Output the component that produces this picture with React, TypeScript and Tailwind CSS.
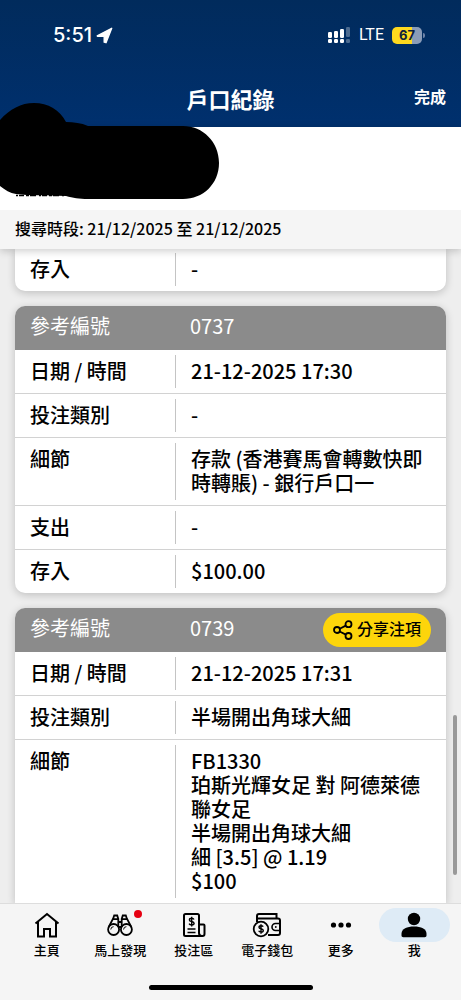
import type { ReactNode } from 'react'

type Row = { label: string; lines: string[] }

type BetRecord = {
  id: string
  reference?: string
  shareable?: boolean
  continues?: boolean
  rows: Row[]
}

const records: BetRecord[] = [
  {
    id: 'previous',
    rows: [{ label: '存入', lines: ['-'] }],
  },
  {
    id: '0737',
    reference: '0737',
    rows: [
      { label: '日期 / 時間', lines: ['21-12-2025 17:30'] },
      { label: '投注類別', lines: ['-'] },
      { label: '細節', lines: ['存款 (香港賽馬會轉數快即時轉賬) - 銀行戶口一'] },
      { label: '支出', lines: ['-'] },
      { label: '存入', lines: ['$100.00'] },
    ],
  },
  {
    id: '0739',
    reference: '0739',
    shareable: true,
    continues: true,
    rows: [
      { label: '日期 / 時間', lines: ['21-12-2025 17:31'] },
      { label: '投注類別', lines: ['半場開出角球大細'] },
      {
        label: '細節',
        lines: [
          'FB1330',
          '珀斯光輝女足 對 阿德萊德聯女足',
          '半場開出角球大細',
          '細 [3.5] @ 1.19',
          '$100',
        ],
      },
    ],
  },
]

function StatusBar() {
  return (
    <div className="flex h-[70px] items-center justify-between pl-[53px] pr-9 font-['Inter','Liberation_Sans',sans-serif]">
      <div className="flex items-center gap-1">
        <span className="text-[20px] font-medium leading-6">5:51</span>
        <svg
          width="17"
          height="17"
          viewBox="0 0 17 17"
          fill="currentColor"
          stroke="currentColor"
          strokeWidth="1.4"
          strokeLinejoin="round"
          aria-hidden="true">
          <path d="M1.2 8.8L15.7 1.3L10 15.7L8.2 15.2V9.2L1.4 9.2z" />
        </svg>
      </div>
      <div className="flex items-center gap-2">
        <svg width="24" height="17" viewBox="0 0 24 17" fill="currentColor" aria-hidden="true">
          <rect x="1" y="5" width="4" height="6" rx="1.2" />
          <rect x="7" y="4" width="4" height="7" rx="1.2" />
          <rect x="13" y="2" width="4" height="9" rx="1.2" />
          <rect x="19" y="0" width="4" height="10" rx="1.2" opacity=".3" />
          <rect x="1" y="12" width="4" height="4" rx="1.2" />
          <rect x="7" y="12" width="4" height="4" rx="1.2" />
          <rect x="13" y="12" width="4" height="4" rx="1.2" />
          <rect x="19" y="12" width="4" height="4" rx="1.2" opacity=".3" />
        </svg>
        <span className="font-['Roboto',sans-serif] text-[16px] leading-5">LTE</span>
        <span className="flex items-center gap-px">
          <span className="flex h-[17px] w-[30px] items-center justify-center rounded-[5px] bg-linear-to-r from-[#ffd91e] from-67% to-[#8a9cb8] to-67% text-[13px] font-bold leading-4 text-[#10213c]">
            67
          </span>
          <span className="h-[5px] w-[2px] rounded-r-full bg-[#6e84a8]" />
        </span>
      </div>
    </div>
  )
}

function ShareIcon() {
  return (
    <svg width="20" height="20" viewBox="0 0 20 20" fill="none" stroke="currentColor" strokeWidth="1.8" aria-hidden="true">
      <circle cx="4" cy="10" r="3" />
      <circle cx="15.5" cy="4.2" r="3" />
      <circle cx="15.5" cy="16" r="3" />
      <path d="M6.7 8.7l6.1-3.1M6.6 11.5l6.3 3.1" />
    </svg>
  )
}

function HomeIcon() {
  return (
    <svg width="26" height="26" viewBox="0 0 26 26" fill="none" stroke="currentColor" strokeWidth="2" aria-hidden="true">
      <path d="M1.5 11.5L13 2l11.5 9.5" />
      <path d="M4 9.8V24.5h6V17h6v7.5h6V9.8" />
    </svg>
  )
}

function BinocularsIcon() {
  return (
    <svg width="26" height="26" viewBox="0 0 26 26" fill="none" stroke="currentColor" strokeWidth="1.8" aria-hidden="true">
      <circle cx="6.6" cy="17.5" r="5.5" />
      <circle cx="19.4" cy="17.5" r="5.5" />
      <path d="M1.7 15l4.5-8.5 1-3h3L11.3 7v8M24.3 15l-4.5-8.5-1-3h-3L14.7 7v8M6 7.2h5.3M14.7 7.2H20M11.3 10h3.4M11.6 15h2.8" />
      <path d="M3.8 17.5a2.8 2.8 0 0 1 2.8-2.8M16.6 17.5a2.8 2.8 0 0 1 2.8-2.8" strokeWidth="1" />
    </svg>
  )
}

function SlipIcon() {
  return (
    <svg width="26" height="26" viewBox="0 0 26 26" fill="none" stroke="currentColor" strokeWidth="2" aria-hidden="true">
      <path d="M18 21V3.5A1.5 1.5 0 0 0 16.5 2h-12A1.5 1.5 0 0 0 3 3.5v19A1.5 1.5 0 0 0 4.5 24h17a2 2 0 0 0 2-2v-8.500a1 1 0 0 0-1-1H18V21a3 3 0 0 0 2.500 3" />
      <path d="M6.5 17h8M6.5 20.5h8" strokeWidth="1.3" />
      <path d="M13 7.500c-.4-.8-1.300-1.200-2.400-1.200-1.300 0-2.200.6-2.200 1.600 0 2.300 4.700 1 4.700 3.400 0 1-1 1.700-2.400 1.700-1.300 0-2.200-.5-2.600-1.400M10.700 4.800v9.600" strokeWidth="1.4" />
    </svg>
  )
}

function WalletIcon() {
  return (
    <svg width="30" height="26" viewBox="0 0 30 26" fill="none" stroke="currentColor" strokeWidth="2" aria-hidden="true">
      <path d="M5 10V4a2 2 0 0 1 2-2h17.5v4" />
      <path d="M5.5 6.5H26a2 2 0 0 1 2 2V21a2 2 0 0 1-2 2H16" />
      <path d="M28 11.5h-4.500a3.500 3.500 0 0 0 0 7H28" strokeWidth="1.6" />
      <circle cx="23.8" cy="15" r=".9" fill="currentColor" stroke="none" />
      <circle cx="9" cy="17" r="7.3" fill="#f5f5f5" strokeWidth="1.8" />
      <path d="M11.200 14.700c-.4-.7-1.200-1-2.200-1-1.200 0-2 .6-2 1.500 0 2.200 4.300 1 4.300 3.300 0 1-.9 1.600-2.200 1.600-1.200 0-2-.4-2.400-1.300M9 12.300v9.400" strokeWidth="1.4" />
    </svg>
  )
}

function MoreIcon() {
  return (
    <svg width="26" height="26" viewBox="0 0 26 26" fill="currentColor" aria-hidden="true">
      <circle cx="5.5" cy="13" r="2.6" />
      <circle cx="13" cy="13" r="2.6" />
      <circle cx="20.5" cy="13" r="2.6" />
    </svg>
  )
}

function PersonIcon() {
  return (
    <svg width="26" height="26" viewBox="0 0 26 26" fill="currentColor" aria-hidden="true">
      <circle cx="13" cy="7" r="6.2" />
      <path d="M.5 23.5v-1.8c0-4.7 5.5-7.2 12.5-7.2s12.5 2.5 12.5 7.2v1.8c0 1-.8 1.7-1.8 1.7H2.3c-1 0-1.8-.7-1.8-1.7z" />
    </svg>
  )
}

function RecordCard({ record }: { record: BetRecord }) {
  return (
    <section
      className={`overflow-hidden bg-white shadow-[0_2px_8px_rgba(0,0,0,0.2)] ${
        record.reference ? 'rounded-t-[10px]' : ''
      } ${record.continues ? '' : 'rounded-b-[10px]'}`}>
      <table className="w-full table-fixed border-collapse text-left text-[20px] leading-6">
        <colgroup>
          <col className="w-[160px]" />
          <col />
        </colgroup>
        {record.reference && (
          <thead>
            <tr className="bg-[#8b8b8b] text-white">
              <th scope="row" className="h-11 pb-1 pl-[15px] pt-0 font-normal">
                參考編號
              </th>
              <td className="h-11 py-0 pl-[15px] pr-[15px]">
                <div className="flex items-center justify-between">
                  <span className="pb-1">{record.reference}</span>
                  {record.shareable && (
                    <button
                      type="button"
                      className="flex h-[34px] items-center gap-1 rounded-full bg-[#fdd50b] px-[10px] text-[16px] font-medium leading-6 text-black">
                      <ShareIcon />
                      <span className="pb-1">分享注項</span>
                    </button>
                  )}
                </div>
              </td>
            </tr>
          </thead>
        )}
        <tbody className="font-medium">
          {record.rows.map(row => (
            <tr key={row.label} className="border-b border-[#d2d2d2] last:border-b-0">
              <th scope="row" className="pb-[10px] pl-[15px] pt-[9px] align-top font-medium">
                {row.label}
              </th>
              <td className="py-[5px] align-top">
                <div className="border-l border-[#c4c4c4] pb-[5px] pl-[15px] pr-[15px] pt-1">
                  {row.lines.map(line => (
                    <p key={line}>{line}</p>
                  ))}
                </div>
              </td>
            </tr>
          ))}
        </tbody>
      </table>
    </section>
  )
}

type TabProps = { label: string; icon: ReactNode; active?: boolean; badge?: boolean }

const tabs: TabProps[] = [
  { label: '主頁', icon: <HomeIcon /> },
  { label: '馬上發現', icon: <BinocularsIcon />, badge: true },
  { label: '投注區', icon: <SlipIcon /> },
  { label: '電子錢包', icon: <WalletIcon /> },
  { label: '更多', icon: <MoreIcon /> },
  { label: '我', icon: <PersonIcon />, active: true },
]

function Tab({ label, icon, active, badge }: TabProps) {
  return (
    <a
      href="#"
      aria-current={active ? 'page' : undefined}
      className="flex flex-1 flex-col items-center text-[13px] font-medium leading-4">
      <span
        className={`relative flex h-[34px] w-[71px] items-center justify-center rounded-full ${
          active ? 'bg-[#deebf6]' : ''
        }`}>
        {icon}
        {badge && <span className="absolute right-[14px] top-[2px] size-2 rounded-full bg-[#e60012]" />}
      </span>
      <span>{label}</span>
    </a>
  )
}

export default function App() {
  return (
    <div className="relative flex h-screen flex-col overflow-hidden bg-[#eeeeee] font-['Noto_Sans_CJK_TC',sans-serif] text-black">
      <header className="bg-linear-to-b from-[#012b5c] to-[#00306e] text-white">
        <StatusBar />
        <div className="grid h-[57px] grid-cols-[1fr_auto_1fr] items-center px-[15px]">
          <h1 className="col-start-2 pb-[2px] text-[22px] font-bold leading-8">戶口紀錄</h1>
          <button type="button" className="justify-self-end pb-[6px] text-[16px] font-bold leading-6">
            完成
          </button>
        </div>
      </header>

      <div className="relative z-10 bg-[#f5f5f5] shadow-[0_2px_8px_rgba(0,0,0,0.2)]">
        <div className="h-[83px] bg-white" />
        <svg
          className="absolute -top-6 left-0"
          width="220"
          height="98"
          viewBox="0 103 220 98"
          aria-hidden="true">
          <path d="M0 120C10 109 21 103 34 103c14 0 26 7 32 19 8 0 15 1 22 4h95c20 0 36 16 36 37s-16 36-36 36H88c-9 0-15-1-22-3-20-1-36 0-50-2-6-1-11-4-16-8z" />
          <path d="M16 195.5h48" stroke="black" strokeWidth="1.5" strokeDasharray="2 1 5 2 3 1 6 3" />
        </svg>
        <p className="px-[15px] pb-[9px] pt-[6px] text-[16px] font-medium leading-6">
          搜尋時段: 21/12/2025 至 21/12/2025
        </p>
      </div>

      <main className="relative -mt-px flex min-h-0 flex-1 flex-col overflow-hidden">
        <div className="flex shrink-0 flex-col gap-[15px] px-[15px]">
          {records.map(record => (
            <RecordCard key={record.id} record={record} />
          ))}
        </div>
        <div className="absolute bottom-7 right-1 h-40 w-1 rounded-full bg-[#999999]" />
      </main>

      <footer className="border-t border-[#dddddd] bg-[#f5f5f5]">
        <nav className="flex px-[10px] pt-1">
          {tabs.map(tab => (
            <Tab key={tab.label} {...tab} />
          ))}
        </nav>
        <div className="flex h-[42px] items-end justify-center pb-[10px]">
          <div className="h-[5px] w-[164px] rounded-full bg-black" />
        </div>
      </footer>
    </div>
  )
}
